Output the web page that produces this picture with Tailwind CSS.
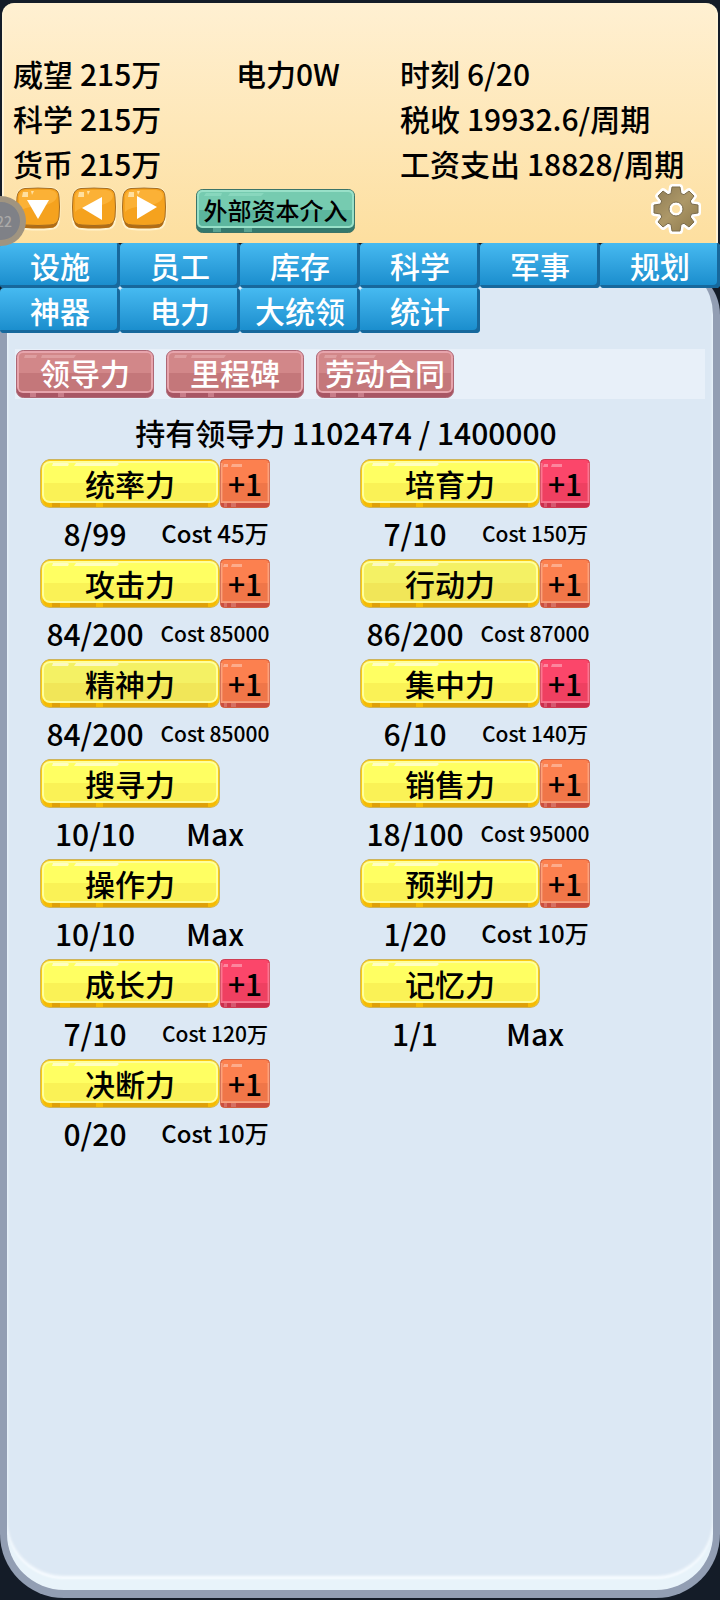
<!DOCTYPE html>
<html lang="zh-CN">
  <head>
    <meta charset="UTF-8">
    <meta name="viewport" content="width=device-width, initial-scale=1.0">
    <title>领导力</title>
    <script src="https://cdn.jsdelivr.net/npm/@tailwindcss/browser@4"></script>
  </head>

  <body class="bg-[#141c28] font-['Noto_Sans_CJK_SC',sans-serif] font-medium text-[30px] leading-[45px] text-black">
    <!-- Button skins -->
    <svg class="hidden">
      <symbol id="skin-yellow" viewBox="0 0 180 49" preserveAspectRatio="none">
        <path d="M9 .5H171Q179.500 3 179.500 12V39Q179 48 170 48.500H10Q1 48 .5 39V12Q1 2 9 .5Z" fill="#fbcb10" stroke="#cdb45c"/>
        <path d="M3 40L10 44H170L177 40Q177 48 169 48H11Q3 48 3 40Z" fill="#f6ba04"/>
        <path d="M12 44h8v4h-8zM30 44h26v4H30zM63 44h105v4H63z" fill="#dfa008"/>
        <rect x="2" y="2" width="176" height="42" rx="8" fill="#ffff9c"/>
        <rect x="4" y="4" width="172" height="38" rx="6" fill="currentColor"/>
        <path d="M4 24H176V36a6 6 0 0 1-6 6H10a6 6 0 0 1-6-6Z" fill="#dfb020" opacity=".17"/>
        <path d="M13 4h14q3 0 1 3H12zM36 4h42q2 2-2 3H34z" fill="#fff" opacity=".6"/>
      </symbol>
      <symbol id="skin-plus" viewBox="0 0 50 49" preserveAspectRatio="none">
        <rect x=".5" y=".5" width="49" height="48" rx="4" fill="currentColor" stroke="currentColor"/>
        <rect x=".5" y=".5" width="49" height="48" rx="4" fill="none" stroke="#903030" opacity=".4"/>
        <rect x="2" y="24" width="46" height="19" fill="#600" opacity=".08"/>
        <path d="M1 44H49Q49 48 46 48H4Q1 48 1 44Z" fill="#901028" opacity=".45"/>
        <path d="M1.500 4V43H48.500V4" fill="none" stroke="#fff" stroke-width="2" opacity=".25"/>
        <path d="M4 44h3v4H4zM11 44h5v4h-5z" fill="#fff" opacity=".2"/>
        <path d="M4 5h4v3H3zM12 5h10v3H11z" fill="#fff" opacity=".35"/>
      </symbol>
      <symbol id="skin-rose" viewBox="0 0 138 48" preserveAspectRatio="none">
        <rect x=".5" y=".5" width="137" height="47" rx="7" fill="#a85664" stroke="#ad6674"/>
        <path d="M14 43h6v4h-6zM42 43h6v4h-6z" fill="#c77c88"/>
        <rect x="1" y="1" width="136" height="42" rx="6" fill="#e7a4ac"/>
        <rect x="3" y="3" width="132" height="38" rx="4" fill="#d28789"/>
        <path d="M3 23H135V37a4 4 0 0 1-4 4H7a4 4 0 0 1-4-4Z" fill="#c4777a"/>
        <path d="M9 5h12l-1 3H8zM26 5h34l-2 3H25z" fill="#e9b5b8" opacity=".5"/>
      </symbol>
      <symbol id="skin-green" viewBox="0 0 159 44" preserveAspectRatio="none">
        <rect x=".5" y=".5" width="158" height="43" rx="6" fill="#34786c" stroke="#3c7468"/>
        <path d="M17 39h8v4h-8zM48 39h8v4h-8z" fill="#58a392"/>
        <rect x="1" y="1" width="157" height="38" rx="5" fill="#98e0c8"/>
        <rect x="3" y="3" width="153" height="34" rx="4" fill="#76cbb0"/>
        <path d="M3 21H156V33a4 4 0 0 1-4 4H7a4 4 0 0 1-4-4Z" fill="#5cb69e"/>
        <path d="M10 4h16l-1 3H8zM34 4h34l-3 3H32z" fill="#a5e8d2" opacity=".4"/>
      </symbol>
      <symbol id="skin-orange" viewBox="0 0 46 44">
        <path d="M10 1Q23 0 36 1Q44 2 44 10Q45 23 44 34Q43 42 35 42Q23 43 11 42Q3 42 2 34Q1 23 2 10Q3 2 10 1Z" fill="#b36c12" stroke="#fff2cc" stroke-width="2"/>
        <path d="M10 1.500Q23 .5 36 1.500Q44 2 44 10Q45 20 44 30Q43 38 35 38Q23 39 11 38Q3 38 2 30Q1 20 2 10Q3 2 10 1.500Z" fill="#f5a21e" stroke="#a56c20"/>
        <path d="M4 9Q5 4 11 3H35Q42 4 42 9Q41 17 24 19Q8 20 4 25Z" fill="#fbb136"/>
        <path d="M8 5h5v5H7zM16 4h3l-2 4z" fill="#ffe0a0"/>
      </symbol>
    </svg>

    <div class="flex min-h-screen flex-col">
      <header class="relative mx-[2px] mt-[3px] rounded-t-xl border-x-2 border-[#fff3d6] bg-linear-to-b from-[#fff0d2] to-[#fddf9f] px-[9px] pt-12 pb-[9px]">
        <div class="flex">
          <dl class="w-[223px]">
            <div class="flex gap-[7px]"><dt>威望</dt><dd>215万</dd></div>
            <div class="flex gap-[7px]"><dt>科学</dt><dd>215万</dd></div>
            <div class="flex gap-[7px]"><dt>货币</dt><dd>215万</dd></div>
          </dl>
          <p class="w-[164px]">电力0W</p>
          <dl class="flex-1 whitespace-nowrap">
            <div class="flex gap-[7px]"><dt>时刻</dt><dd>6/20</dd></div>
            <div class="flex gap-[7px]"><dt>税收</dt><dd>19932.6/周期</dd></div>
            <div class="flex gap-[7px]"><dt>工资支出</dt><dd>18828/周期</dd></div>
          </dl>
        </div>
        <div class="-mt-[2px] flex items-center pl-[2px]">
          <button type="button" aria-label="展开" class="mr-[10px]">
            <svg class="h-[44px] w-[46px]"><use href="#skin-orange"/><path d="M12 13H34L23 32Z" fill="#fff"/></svg>
          </button>
          <button type="button" aria-label="上一页" class="mr-1">
            <svg class="h-[44px] w-[46px]"><use href="#skin-orange"/><path d="M31 10V33L11 21Z" fill="#fff"/></svg>
          </button>
          <button type="button" aria-label="下一页">
            <svg class="h-[44px] w-[46px]"><use href="#skin-orange"/><path d="M16 9V32L36 20Z" fill="#fff"/></svg>
          </button>
          <button type="button" class="relative mt-1 ml-[29px] h-[44px] w-[159px] pb-[2px] text-2xl leading-[42px]">
            <svg class="absolute inset-0 size-full"><use href="#skin-green"/></svg>
            <span class="relative">外部资本介入</span>
          </button>
          <button type="button" aria-label="设置" class="mr-[6px] ml-auto">
            <svg class="size-[50px]" viewBox="-25 -25 50 50">
              <defs>
                <linearGradient id="metal" x1="0" y1="0" x2="1" y2="1">
                  <stop offset="0" stop-color="#8d7b54"/>
                  <stop offset=".5" stop-color="#ad9868"/>
                  <stop offset="1" stop-color="#8b7749"/>
                </linearGradient>
                <path id="gear" d="M-4-22H4L5-15.500L8-14.300L13-18L18-13L14.300-8L15.500-5L22-4V4L15.500 5L14.300 8L18 13L13 18L8 14.300L5 15.500L4 22H-4L-5 15.500L-8 14.300L-13 18L-18 13L-14.300 8L-15.500 5L-22 4V-4L-15.500-5L-14.300-8L-18-13L-13-18L-8-14.300L-5-15.500ZM0-7A7 7 0 0 0 0 7A7 7 0 0 0 0-7Z"/>
              </defs>
              <use href="#gear" fill="#fff" stroke="#fff" stroke-width="6" stroke-linejoin="round"/>
              <use href="#gear" fill="url(#metal)" stroke="#7b6c4c" stroke-width="1"/>
            </svg>
          </button>
        </div>
        <!-- Floating assist ball, half off the left edge -->
        <div class="absolute bottom-[-3px] left-[-28px] z-20 flex size-[50px] items-center justify-end rounded-full border-[6px] border-[#b5a27c]/60 bg-[#7f8187] pr-2 text-sm text-[#aaa9a8]">22</div>
      </header>

      <nav class="relative z-10 grid grid-cols-6 text-white" id="tabs"></nav>

      <main class="-mt-[68px] mb-[2px] flex-1 rounded-t-[50px] rounded-b-[64px] border-x-[7px] border-b-[8px] border-[#929eb3] bg-[#dce8f4] px-2 pt-[84px] shadow-[inset_0_-11px_2px_#e8f3fa,inset_0_-14px_3px_#f8fcff]">
        <div class="flex gap-3 bg-[#e8f0f9] py-px pl-px text-white" id="sections"></div>
        <h1 class="mt-[11px] pr-7 text-center">持有领导力 1102474 / 1400000</h1>
        <div class="mt-1 ml-[25px] grid grid-cols-[320px_1fr]" id="stats"></div>
      </main>
    </div>

    <script>
      const tabs = ["设施", "员工", "库存", "科学", "军事", "规划", "神器", "电力", "大统领", "统计"];
      const sections = ["领导力", "里程碑", "劳动合同"];

      // name, level, cost, cost text size, plus button colour, name button colour
      const orange = "text-[#fc804f]";
      const pink = "text-[#fb466a]";
      const bright = "text-[#ffff62]";
      const dull = "text-[#f4f164]";
      const big = "text-[30px]";
      const mid = "text-2xl";
      const small = "text-[21px]";
      const stats = [
        ["统率力", "8/99", "Cost 45万", mid, orange, bright],
        ["培育力", "7/10", "Cost 150万", small, pink, bright],
        ["攻击力", "84/200", "Cost 85000", small, orange, bright],
        ["行动力", "86/200", "Cost 87000", small, orange, dull],
        ["精神力", "84/200", "Cost 85000", small, orange, dull],
        ["集中力", "6/10", "Cost 140万", small, pink, bright],
        ["搜寻力", "10/10", "Max", big, "", bright],
        ["销售力", "18/100", "Cost 95000", small, orange, bright],
        ["操作力", "10/10", "Max", big, "", bright],
        ["预判力", "1/20", "Cost 10万", mid, orange, bright],
        ["成长力", "7/10", "Cost 120万", small, pink, bright],
        ["记忆力", "1/1", "Max", big, "", bright],
        ["决断力", "0/20", "Cost 10万", mid, orange, bright],
      ];

      document.getElementById("tabs").innerHTML = tabs.map((t) => `
        <button type="button" class="h-[45px] rounded-sm bg-linear-to-b from-[#46baf1] to-[#168bcb] leading-[45px] shadow-[inset_-3px_-3px_0_#17689c]">${t}</button>`).join("");

      document.getElementById("sections").innerHTML = sections.map((s) => `
        <button type="button" class="relative h-12 w-[138px] pb-[3px] leading-[45px]">
          <svg class="absolute inset-0 size-full"><use href="#skin-rose"/></svg>
          <span class="relative">${s}</span>
        </button>`).join("");

      document.getElementById("stats").innerHTML = stats.map(([name, level, cost, size, plus, tone]) => `
        <div class="h-[100px]">
          <div class="flex">
            <button type="button" class="relative h-[49px] w-[180px] leading-[49px]">
              <svg class="absolute inset-0 size-full ${tone}"><use href="#skin-yellow"/></svg>
              <span class="relative">${name}</span>
            </button>
            ${plus ? `<button type="button" class="relative h-[49px] w-[50px] leading-[49px]">
              <svg class="absolute inset-0 size-full ${plus}"><use href="#skin-plus"/></svg>
              <span class="relative">+1</span>
            </button>` : ""}
          </div>
          <div class="flex h-[50px] w-[230px] items-center gap-[10px] text-center whitespace-nowrap">
            <span class="w-[110px]">${level}</span>
            <span class="w-[110px] ${size}">${cost}</span>
          </div>
        </div>`).join("");
    </script>
  </body>
</html>
